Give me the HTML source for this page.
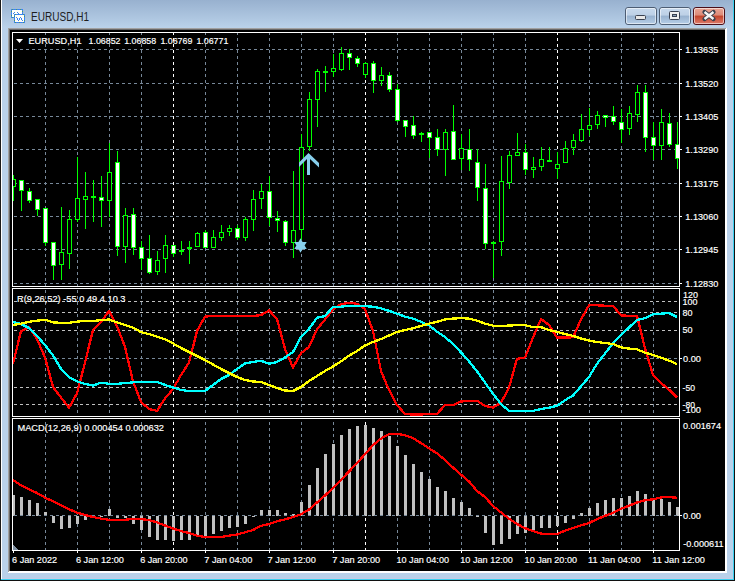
<!DOCTYPE html><html><head><meta charset="utf-8"><style>html,body{margin:0;padding:0;background:#fff;}body{width:737px;height:582px;overflow:hidden;}svg{display:block;font-family:"Liberation Sans",sans-serif;}</style></head><body>
<svg width="737" height="582" viewBox="0 0 737 582">
<defs><linearGradient id="tg" x1="0" y1="0" x2="0" y2="1"><stop offset="0" stop-color="#98b1cf"/><stop offset="1" stop-color="#bad2ea"/></linearGradient><linearGradient id="bt" x1="0" y1="0" x2="0" y2="1"><stop offset="0" stop-color="#c9dbee"/><stop offset="0.45" stop-color="#bdd0e6"/><stop offset="0.5" stop-color="#98b2cf"/><stop offset="1" stop-color="#b8cfe8"/></linearGradient><linearGradient id="ct" x1="0" y1="0" x2="0" y2="1"><stop offset="0" stop-color="#eaa898"/><stop offset="0.45" stop-color="#dc8a78"/><stop offset="0.5" stop-color="#c2432a"/><stop offset="1" stop-color="#e08070"/></linearGradient></defs>
<g shape-rendering="crispEdges">
<rect x="0" y="0" width="737" height="582" fill="#ffffff"/>
<rect x="0" y="0" width="735" height="581" fill="#b9d1ea"/>
<rect x="0" y="0" width="735" height="28" fill="url(#tg)"/>
<rect x="0" y="0" width="1" height="581" fill="#1a1a1a"/>
<rect x="1" y="0" width="1" height="579" fill="#ffffff"/>
<rect x="733" y="0" width="1" height="580" fill="#3ad0f0"/>
<rect x="734" y="0" width="1" height="581" fill="#101010"/>
<rect x="2" y="578" width="731" height="1" fill="#c8cce6"/>
<rect x="1" y="579" width="733" height="1" fill="#3ad0f0"/>
<rect x="0" y="580" width="735" height="1" fill="#101010"/>
<rect x="8" y="28" width="719" height="545" fill="#ffffff"/>
<rect x="8" y="28" width="718" height="1" fill="#a0a0a0"/>
<rect x="8" y="28" width="1" height="544" fill="#a0a0a0"/>
<rect x="9" y="29" width="716" height="1" fill="#696969"/>
<rect x="9" y="29" width="1" height="542" fill="#696969"/>
<rect x="10" y="30" width="715" height="541" fill="#000000"/>
</g>
<g shape-rendering="crispEdges"><rect x="11" y="9" width="12" height="9" fill="#3d84f2"/><rect x="12" y="10" width="10" height="7" fill="#fffef8"/><rect x="12" y="9" width="1" height="1" fill="#4a9a6a"/><rect x="12" y="17" width="1" height="1" fill="#4a9a6a"/><rect x="16" y="9" width="1" height="1" fill="#4a9a6a"/><rect x="16" y="17" width="1" height="1" fill="#4a9a6a"/><rect x="20" y="9" width="1" height="1" fill="#4a9a6a"/><rect x="20" y="17" width="1" height="1" fill="#4a9a6a"/><rect x="11" y="11" width="1" height="1" fill="#4a9a6a"/><rect x="22" y="11" width="1" height="1" fill="#4a9a6a"/><rect x="11" y="15" width="1" height="1" fill="#4a9a6a"/><rect x="22" y="15" width="1" height="1" fill="#4a9a6a"/><rect x="14" y="14" width="11" height="9" fill="#3d84f2"/><rect x="15" y="15" width="9" height="7" fill="#fffef8"/><rect x="15" y="14" width="1" height="1" fill="#4a9a6a"/><rect x="15" y="22" width="1" height="1" fill="#4a9a6a"/><rect x="19" y="14" width="1" height="1" fill="#4a9a6a"/><rect x="19" y="22" width="1" height="1" fill="#4a9a6a"/><rect x="23" y="14" width="1" height="1" fill="#4a9a6a"/><rect x="23" y="22" width="1" height="1" fill="#4a9a6a"/><rect x="14" y="16" width="1" height="1" fill="#4a9a6a"/><rect x="24" y="16" width="1" height="1" fill="#4a9a6a"/><rect x="14" y="20" width="1" height="1" fill="#4a9a6a"/><rect x="24" y="20" width="1" height="1" fill="#4a9a6a"/><rect x="13" y="13" width="1" height="1" fill="#3d84f2"/><rect x="14" y="12" width="1" height="1" fill="#3d84f2"/><rect x="17" y="12" width="1" height="1" fill="#3d84f2"/><rect x="18" y="13" width="1" height="1" fill="#3d84f2"/><rect x="19" y="14" width="1" height="1" fill="#3d84f2"/><rect x="16" y="17" width="1" height="1" fill="#3d84f2"/><rect x="17" y="18" width="1" height="1" fill="#3d84f2"/><rect x="17" y="19" width="1" height="1" fill="#3d84f2"/><rect x="18" y="20" width="1" height="1" fill="#3d84f2"/><rect x="19" y="19" width="1" height="1" fill="#3d84f2"/><rect x="19" y="18" width="1" height="1" fill="#3d84f2"/><rect x="20" y="17" width="1" height="1" fill="#3d84f2"/><rect x="21" y="18" width="1" height="1" fill="#3d84f2"/><rect x="21" y="19" width="1" height="1" fill="#3d84f2"/><rect x="22" y="20" width="1" height="1" fill="#3d84f2"/></g>
<text x="31" y="21" font-size="12" fill="#1e1e1e" textLength="58" lengthAdjust="spacingAndGlyphs">EURUSD,H1</text>
<rect x="625.5" y="7.5" width="31" height="17" rx="2.5" ry="2.5" fill="url(#bt)" stroke="#4d5d73" stroke-width="1"/>
<rect x="626.5" y="8.5" width="29" height="15" rx="1.5" ry="1.5" fill="none" stroke="#ffffff" stroke-opacity="0.55" stroke-width="1"/>
<rect x="659.5" y="7.5" width="31" height="17" rx="2.5" ry="2.5" fill="url(#bt)" stroke="#4d5d73" stroke-width="1"/>
<rect x="660.5" y="8.5" width="29" height="15" rx="1.5" ry="1.5" fill="none" stroke="#ffffff" stroke-opacity="0.55" stroke-width="1"/>
<rect x="693.5" y="7.5" width="31" height="17" rx="2.5" ry="2.5" fill="url(#ct)" stroke="#4a0e18" stroke-width="1"/>
<rect x="694.5" y="8.5" width="29" height="15" rx="1.5" ry="1.5" fill="none" stroke="#ffffff" stroke-opacity="0.55" stroke-width="1"/>
<rect x="635.5" y="15.5" width="10" height="4" rx="1" fill="#e8e8e8" stroke="#3a4150" stroke-width="1"/>
<rect x="669.5" y="11.5" width="10" height="8" rx="1" fill="#f0f0f0" stroke="#3a4150" stroke-width="1"/>
<rect x="672.5" y="14.5" width="4" height="2" fill="#8aa0b8" stroke="#3a4150" stroke-width="1"/>
<path d="M704.5,12 L713.5,19 M713.5,12 L704.5,19" stroke="#3a3f4c" stroke-width="4.2" stroke-linecap="round"/>
<path d="M704.5,12 L713.5,19 M713.5,12 L704.5,19" stroke="#f4f4f4" stroke-width="2.4" stroke-linecap="butt"/>
<g shape-rendering="crispEdges">
<line x1="14" y1="49.5" x2="679" y2="49.5" stroke="#778899" stroke-width="1" stroke-dasharray="3 3" />
<line x1="14" y1="83.5" x2="679" y2="83.5" stroke="#778899" stroke-width="1" stroke-dasharray="3 3" />
<line x1="14" y1="116.5" x2="679" y2="116.5" stroke="#778899" stroke-width="1" stroke-dasharray="3 3" />
<line x1="14" y1="149.5" x2="679" y2="149.5" stroke="#778899" stroke-width="1" stroke-dasharray="3 3" />
<line x1="14" y1="183.5" x2="679" y2="183.5" stroke="#778899" stroke-width="1" stroke-dasharray="3 3" />
<line x1="14" y1="216.5" x2="679" y2="216.5" stroke="#778899" stroke-width="1" stroke-dasharray="3 3" />
<line x1="14" y1="249.5" x2="679" y2="249.5" stroke="#778899" stroke-width="1" stroke-dasharray="3 3" />
<line x1="14" y1="283.5" x2="679" y2="283.5" stroke="#778899" stroke-width="1" stroke-dasharray="3 3" />
<line x1="45.5" y1="33" x2="45.5" y2="286" stroke="#778899" stroke-width="1" stroke-dasharray="3 3" stroke-dashoffset="1"/>
<line x1="45.5" y1="289" x2="45.5" y2="416" stroke="#778899" stroke-width="1" stroke-dasharray="3 3" stroke-dashoffset="5"/>
<line x1="45.5" y1="419" x2="45.5" y2="550" stroke="#778899" stroke-width="1" stroke-dasharray="3 3" stroke-dashoffset="3"/>
<line x1="77.5" y1="33" x2="77.5" y2="286" stroke="#778899" stroke-width="1" stroke-dasharray="3 3" stroke-dashoffset="1"/>
<line x1="77.5" y1="289" x2="77.5" y2="416" stroke="#778899" stroke-width="1" stroke-dasharray="3 3" stroke-dashoffset="5"/>
<line x1="77.5" y1="419" x2="77.5" y2="550" stroke="#778899" stroke-width="1" stroke-dasharray="3 3" stroke-dashoffset="3"/>
<line x1="109.5" y1="33" x2="109.5" y2="286" stroke="#778899" stroke-width="1" stroke-dasharray="3 3" stroke-dashoffset="1"/>
<line x1="109.5" y1="289" x2="109.5" y2="416" stroke="#778899" stroke-width="1" stroke-dasharray="3 3" stroke-dashoffset="5"/>
<line x1="109.5" y1="419" x2="109.5" y2="550" stroke="#778899" stroke-width="1" stroke-dasharray="3 3" stroke-dashoffset="3"/>
<line x1="141.5" y1="33" x2="141.5" y2="286" stroke="#778899" stroke-width="1" stroke-dasharray="3 3" stroke-dashoffset="1"/>
<line x1="141.5" y1="289" x2="141.5" y2="416" stroke="#778899" stroke-width="1" stroke-dasharray="3 3" stroke-dashoffset="5"/>
<line x1="141.5" y1="419" x2="141.5" y2="550" stroke="#778899" stroke-width="1" stroke-dasharray="3 3" stroke-dashoffset="3"/>
<line x1="173.5" y1="33" x2="173.5" y2="286" stroke="#ffffff" stroke-width="1" stroke-dasharray="3 3" stroke-dashoffset="1"/>
<line x1="173.5" y1="289" x2="173.5" y2="416" stroke="#ffffff" stroke-width="1" stroke-dasharray="3 3" stroke-dashoffset="5"/>
<line x1="173.5" y1="419" x2="173.5" y2="550" stroke="#ffffff" stroke-width="1" stroke-dasharray="3 3" stroke-dashoffset="3"/>
<line x1="205.5" y1="33" x2="205.5" y2="286" stroke="#778899" stroke-width="1" stroke-dasharray="3 3" stroke-dashoffset="1"/>
<line x1="205.5" y1="289" x2="205.5" y2="416" stroke="#778899" stroke-width="1" stroke-dasharray="3 3" stroke-dashoffset="5"/>
<line x1="205.5" y1="419" x2="205.5" y2="550" stroke="#778899" stroke-width="1" stroke-dasharray="3 3" stroke-dashoffset="3"/>
<line x1="237.5" y1="33" x2="237.5" y2="286" stroke="#778899" stroke-width="1" stroke-dasharray="3 3" stroke-dashoffset="1"/>
<line x1="237.5" y1="289" x2="237.5" y2="416" stroke="#778899" stroke-width="1" stroke-dasharray="3 3" stroke-dashoffset="5"/>
<line x1="237.5" y1="419" x2="237.5" y2="550" stroke="#778899" stroke-width="1" stroke-dasharray="3 3" stroke-dashoffset="3"/>
<line x1="269.5" y1="33" x2="269.5" y2="286" stroke="#778899" stroke-width="1" stroke-dasharray="3 3" stroke-dashoffset="1"/>
<line x1="269.5" y1="289" x2="269.5" y2="416" stroke="#778899" stroke-width="1" stroke-dasharray="3 3" stroke-dashoffset="5"/>
<line x1="269.5" y1="419" x2="269.5" y2="550" stroke="#778899" stroke-width="1" stroke-dasharray="3 3" stroke-dashoffset="3"/>
<line x1="301.5" y1="33" x2="301.5" y2="286" stroke="#778899" stroke-width="1" stroke-dasharray="3 3" stroke-dashoffset="1"/>
<line x1="301.5" y1="289" x2="301.5" y2="416" stroke="#778899" stroke-width="1" stroke-dasharray="3 3" stroke-dashoffset="5"/>
<line x1="301.5" y1="419" x2="301.5" y2="550" stroke="#778899" stroke-width="1" stroke-dasharray="3 3" stroke-dashoffset="3"/>
<line x1="333.5" y1="33" x2="333.5" y2="286" stroke="#778899" stroke-width="1" stroke-dasharray="3 3" stroke-dashoffset="1"/>
<line x1="333.5" y1="289" x2="333.5" y2="416" stroke="#778899" stroke-width="1" stroke-dasharray="3 3" stroke-dashoffset="5"/>
<line x1="333.5" y1="419" x2="333.5" y2="550" stroke="#778899" stroke-width="1" stroke-dasharray="3 3" stroke-dashoffset="3"/>
<line x1="365.5" y1="33" x2="365.5" y2="286" stroke="#ffffff" stroke-width="1" stroke-dasharray="3 3" stroke-dashoffset="1"/>
<line x1="365.5" y1="289" x2="365.5" y2="416" stroke="#ffffff" stroke-width="1" stroke-dasharray="3 3" stroke-dashoffset="5"/>
<line x1="365.5" y1="419" x2="365.5" y2="550" stroke="#ffffff" stroke-width="1" stroke-dasharray="3 3" stroke-dashoffset="3"/>
<line x1="397.5" y1="33" x2="397.5" y2="286" stroke="#778899" stroke-width="1" stroke-dasharray="3 3" stroke-dashoffset="1"/>
<line x1="397.5" y1="289" x2="397.5" y2="416" stroke="#778899" stroke-width="1" stroke-dasharray="3 3" stroke-dashoffset="5"/>
<line x1="397.5" y1="419" x2="397.5" y2="550" stroke="#778899" stroke-width="1" stroke-dasharray="3 3" stroke-dashoffset="3"/>
<line x1="429.5" y1="33" x2="429.5" y2="286" stroke="#778899" stroke-width="1" stroke-dasharray="3 3" stroke-dashoffset="1"/>
<line x1="429.5" y1="289" x2="429.5" y2="416" stroke="#778899" stroke-width="1" stroke-dasharray="3 3" stroke-dashoffset="5"/>
<line x1="429.5" y1="419" x2="429.5" y2="550" stroke="#778899" stroke-width="1" stroke-dasharray="3 3" stroke-dashoffset="3"/>
<line x1="461.5" y1="33" x2="461.5" y2="286" stroke="#778899" stroke-width="1" stroke-dasharray="3 3" stroke-dashoffset="1"/>
<line x1="461.5" y1="289" x2="461.5" y2="416" stroke="#778899" stroke-width="1" stroke-dasharray="3 3" stroke-dashoffset="5"/>
<line x1="461.5" y1="419" x2="461.5" y2="550" stroke="#778899" stroke-width="1" stroke-dasharray="3 3" stroke-dashoffset="3"/>
<line x1="493.5" y1="33" x2="493.5" y2="286" stroke="#778899" stroke-width="1" stroke-dasharray="3 3" stroke-dashoffset="1"/>
<line x1="493.5" y1="289" x2="493.5" y2="416" stroke="#778899" stroke-width="1" stroke-dasharray="3 3" stroke-dashoffset="5"/>
<line x1="493.5" y1="419" x2="493.5" y2="550" stroke="#778899" stroke-width="1" stroke-dasharray="3 3" stroke-dashoffset="3"/>
<line x1="525.5" y1="33" x2="525.5" y2="286" stroke="#778899" stroke-width="1" stroke-dasharray="3 3" stroke-dashoffset="1"/>
<line x1="525.5" y1="289" x2="525.5" y2="416" stroke="#778899" stroke-width="1" stroke-dasharray="3 3" stroke-dashoffset="5"/>
<line x1="525.5" y1="419" x2="525.5" y2="550" stroke="#778899" stroke-width="1" stroke-dasharray="3 3" stroke-dashoffset="3"/>
<line x1="557.5" y1="33" x2="557.5" y2="286" stroke="#ffffff" stroke-width="1" stroke-dasharray="3 3" stroke-dashoffset="1"/>
<line x1="557.5" y1="289" x2="557.5" y2="416" stroke="#ffffff" stroke-width="1" stroke-dasharray="3 3" stroke-dashoffset="5"/>
<line x1="557.5" y1="419" x2="557.5" y2="550" stroke="#ffffff" stroke-width="1" stroke-dasharray="3 3" stroke-dashoffset="3"/>
<line x1="589.5" y1="33" x2="589.5" y2="286" stroke="#778899" stroke-width="1" stroke-dasharray="3 3" stroke-dashoffset="1"/>
<line x1="589.5" y1="289" x2="589.5" y2="416" stroke="#778899" stroke-width="1" stroke-dasharray="3 3" stroke-dashoffset="5"/>
<line x1="589.5" y1="419" x2="589.5" y2="550" stroke="#778899" stroke-width="1" stroke-dasharray="3 3" stroke-dashoffset="3"/>
<line x1="621.5" y1="33" x2="621.5" y2="286" stroke="#778899" stroke-width="1" stroke-dasharray="3 3" stroke-dashoffset="1"/>
<line x1="621.5" y1="289" x2="621.5" y2="416" stroke="#778899" stroke-width="1" stroke-dasharray="3 3" stroke-dashoffset="5"/>
<line x1="621.5" y1="419" x2="621.5" y2="550" stroke="#778899" stroke-width="1" stroke-dasharray="3 3" stroke-dashoffset="3"/>
<line x1="653.5" y1="33" x2="653.5" y2="286" stroke="#778899" stroke-width="1" stroke-dasharray="3 3" stroke-dashoffset="1"/>
<line x1="653.5" y1="289" x2="653.5" y2="416" stroke="#778899" stroke-width="1" stroke-dasharray="3 3" stroke-dashoffset="5"/>
<line x1="653.5" y1="419" x2="653.5" y2="550" stroke="#778899" stroke-width="1" stroke-dasharray="3 3" stroke-dashoffset="3"/>
<line x1="14" y1="301.5" x2="679" y2="301.5" stroke="#c0c0c0" stroke-width="1" stroke-dasharray="3 3" />
<line x1="14" y1="312.5" x2="679" y2="312.5" stroke="#c0c0c0" stroke-width="1" stroke-dasharray="3 3" />
<line x1="14" y1="330.5" x2="679" y2="330.5" stroke="#c0c0c0" stroke-width="1" stroke-dasharray="3 3" />
<line x1="14" y1="387.5" x2="679" y2="387.5" stroke="#c0c0c0" stroke-width="1" stroke-dasharray="3 3" />
<line x1="14" y1="404.5" x2="679" y2="404.5" stroke="#c0c0c0" stroke-width="1" stroke-dasharray="3 3" />
<line x1="14" y1="358.5" x2="679" y2="358.5" stroke="#778899" stroke-width="1" stroke-dasharray="3 3" />
</g>
<svg x="13" y="33" width="666" height="253" viewBox="13 33 666 253" overflow="hidden"><g shape-rendering="crispEdges">
<rect x="13" y="175" width="1" height="26" fill="#00ff00"/>
<rect x="11" y="179" width="5" height="8" fill="#00ff00"/>
<rect x="12" y="180" width="3" height="6" fill="#000000"/>
<rect x="21" y="180" width="1" height="31" fill="#00ff00"/>
<rect x="19" y="180" width="5" height="11" fill="#00ff00"/>
<rect x="20" y="181" width="3" height="9" fill="#ffffff"/>
<rect x="29" y="188" width="1" height="15" fill="#00ff00"/>
<rect x="27" y="191" width="5" height="10" fill="#00ff00"/>
<rect x="28" y="192" width="3" height="8" fill="#ffffff"/>
<rect x="37" y="199" width="1" height="17" fill="#00ff00"/>
<rect x="35" y="199" width="5" height="11" fill="#00ff00"/>
<rect x="36" y="200" width="3" height="9" fill="#ffffff"/>
<rect x="45" y="208" width="1" height="38" fill="#00ff00"/>
<rect x="43" y="208" width="5" height="35" fill="#00ff00"/>
<rect x="44" y="209" width="3" height="33" fill="#ffffff"/>
<rect x="53" y="242" width="1" height="38" fill="#00ff00"/>
<rect x="51" y="242" width="5" height="24" fill="#00ff00"/>
<rect x="52" y="243" width="3" height="22" fill="#ffffff"/>
<rect x="61" y="207" width="1" height="73" fill="#00ff00"/>
<rect x="59" y="252" width="5" height="13" fill="#00ff00"/>
<rect x="60" y="253" width="3" height="11" fill="#000000"/>
<rect x="69" y="210" width="1" height="59" fill="#00ff00"/>
<rect x="67" y="219" width="5" height="35" fill="#00ff00"/>
<rect x="68" y="220" width="3" height="33" fill="#000000"/>
<rect x="77" y="157" width="1" height="65" fill="#00ff00"/>
<rect x="75" y="198" width="5" height="22" fill="#00ff00"/>
<rect x="76" y="199" width="3" height="20" fill="#000000"/>
<rect x="85" y="172" width="1" height="57" fill="#00ff00"/>
<rect x="83" y="196" width="5" height="4" fill="#00ff00"/>
<rect x="84" y="197" width="3" height="2" fill="#000000"/>
<rect x="93" y="180" width="1" height="42" fill="#00ff00"/>
<rect x="91" y="196" width="5" height="2" fill="#00ff00"/>
<rect x="101" y="176" width="1" height="51" fill="#00ff00"/>
<rect x="99" y="197" width="5" height="4" fill="#00ff00"/>
<rect x="100" y="198" width="3" height="2" fill="#ffffff"/>
<rect x="109" y="143" width="1" height="74" fill="#00ff00"/>
<rect x="107" y="172" width="5" height="29" fill="#00ff00"/>
<rect x="108" y="173" width="3" height="27" fill="#000000"/>
<rect x="117" y="151" width="1" height="105" fill="#00ff00"/>
<rect x="115" y="162" width="5" height="85" fill="#00ff00"/>
<rect x="116" y="163" width="3" height="83" fill="#ffffff"/>
<rect x="125" y="208" width="1" height="55" fill="#00ff00"/>
<rect x="123" y="215" width="5" height="32" fill="#00ff00"/>
<rect x="124" y="216" width="3" height="30" fill="#000000"/>
<rect x="133" y="208" width="1" height="47" fill="#00ff00"/>
<rect x="131" y="214" width="5" height="34" fill="#00ff00"/>
<rect x="132" y="215" width="3" height="32" fill="#ffffff"/>
<rect x="141" y="241" width="1" height="29" fill="#00ff00"/>
<rect x="139" y="247" width="5" height="12" fill="#00ff00"/>
<rect x="140" y="248" width="3" height="10" fill="#ffffff"/>
<rect x="149" y="235" width="1" height="39" fill="#00ff00"/>
<rect x="147" y="258" width="5" height="15" fill="#00ff00"/>
<rect x="148" y="259" width="3" height="13" fill="#ffffff"/>
<rect x="157" y="251" width="1" height="24" fill="#00ff00"/>
<rect x="155" y="260" width="5" height="12" fill="#00ff00"/>
<rect x="156" y="261" width="3" height="10" fill="#000000"/>
<rect x="165" y="235" width="1" height="38" fill="#00ff00"/>
<rect x="163" y="245" width="5" height="14" fill="#00ff00"/>
<rect x="164" y="246" width="3" height="12" fill="#000000"/>
<rect x="173" y="245" width="1" height="12" fill="#00ff00"/>
<rect x="171" y="245" width="5" height="9" fill="#00ff00"/>
<rect x="172" y="246" width="3" height="7" fill="#ffffff"/>
<rect x="181" y="241" width="1" height="14" fill="#00ff00"/>
<rect x="179" y="250" width="5" height="2" fill="#00ff00"/>
<rect x="189" y="241" width="1" height="23" fill="#00ff00"/>
<rect x="187" y="247" width="5" height="2" fill="#00ff00"/>
<rect x="197" y="232" width="1" height="15" fill="#00ff00"/>
<rect x="195" y="233" width="5" height="14" fill="#00ff00"/>
<rect x="196" y="234" width="3" height="12" fill="#000000"/>
<rect x="205" y="230" width="1" height="18" fill="#00ff00"/>
<rect x="203" y="232" width="5" height="16" fill="#00ff00"/>
<rect x="204" y="233" width="3" height="14" fill="#ffffff"/>
<rect x="213" y="230" width="1" height="18" fill="#00ff00"/>
<rect x="211" y="237" width="5" height="11" fill="#00ff00"/>
<rect x="212" y="238" width="3" height="9" fill="#000000"/>
<rect x="221" y="225" width="1" height="16" fill="#00ff00"/>
<rect x="219" y="232" width="5" height="6" fill="#00ff00"/>
<rect x="220" y="233" width="3" height="4" fill="#000000"/>
<rect x="229" y="225" width="1" height="11" fill="#00ff00"/>
<rect x="227" y="228" width="5" height="4" fill="#00ff00"/>
<rect x="228" y="229" width="3" height="2" fill="#000000"/>
<rect x="237" y="225" width="1" height="15" fill="#00ff00"/>
<rect x="235" y="228" width="5" height="10" fill="#00ff00"/>
<rect x="236" y="229" width="3" height="8" fill="#ffffff"/>
<rect x="245" y="217" width="1" height="24" fill="#00ff00"/>
<rect x="243" y="219" width="5" height="19" fill="#00ff00"/>
<rect x="244" y="220" width="3" height="17" fill="#000000"/>
<rect x="253" y="190" width="1" height="41" fill="#00ff00"/>
<rect x="251" y="199" width="5" height="21" fill="#00ff00"/>
<rect x="252" y="200" width="3" height="19" fill="#000000"/>
<rect x="261" y="184" width="1" height="25" fill="#00ff00"/>
<rect x="259" y="191" width="5" height="8" fill="#00ff00"/>
<rect x="260" y="192" width="3" height="6" fill="#000000"/>
<rect x="269" y="176" width="1" height="50" fill="#00ff00"/>
<rect x="267" y="191" width="5" height="27" fill="#00ff00"/>
<rect x="268" y="192" width="3" height="25" fill="#ffffff"/>
<rect x="277" y="211" width="1" height="21" fill="#00ff00"/>
<rect x="275" y="218" width="5" height="3" fill="#00ff00"/>
<rect x="276" y="219" width="3" height="1" fill="#ffffff"/>
<rect x="285" y="220" width="1" height="26" fill="#00ff00"/>
<rect x="283" y="221" width="5" height="22" fill="#00ff00"/>
<rect x="284" y="222" width="3" height="20" fill="#ffffff"/>
<rect x="293" y="171" width="1" height="87" fill="#00ff00"/>
<rect x="291" y="230" width="5" height="13" fill="#00ff00"/>
<rect x="292" y="231" width="3" height="11" fill="#000000"/>
<rect x="301" y="134" width="1" height="106" fill="#00ff00"/>
<rect x="299" y="147" width="5" height="83" fill="#00ff00"/>
<rect x="300" y="148" width="3" height="81" fill="#000000"/>
<rect x="309" y="92" width="1" height="59" fill="#00ff00"/>
<rect x="307" y="99" width="5" height="48" fill="#00ff00"/>
<rect x="308" y="100" width="3" height="46" fill="#000000"/>
<rect x="317" y="69" width="1" height="58" fill="#00ff00"/>
<rect x="315" y="71" width="5" height="29" fill="#00ff00"/>
<rect x="316" y="72" width="3" height="27" fill="#000000"/>
<rect x="325" y="66" width="1" height="26" fill="#00ff00"/>
<rect x="323" y="71" width="5" height="2" fill="#00ff00"/>
<rect x="333" y="54" width="1" height="23" fill="#00ff00"/>
<rect x="331" y="68" width="5" height="4" fill="#00ff00"/>
<rect x="332" y="69" width="3" height="2" fill="#000000"/>
<rect x="341" y="47" width="1" height="24" fill="#00ff00"/>
<rect x="339" y="53" width="5" height="17" fill="#00ff00"/>
<rect x="340" y="54" width="3" height="15" fill="#000000"/>
<rect x="349" y="49" width="1" height="21" fill="#00ff00"/>
<rect x="347" y="53" width="5" height="5" fill="#00ff00"/>
<rect x="348" y="54" width="3" height="3" fill="#ffffff"/>
<rect x="357" y="56" width="1" height="11" fill="#00ff00"/>
<rect x="355" y="58" width="5" height="6" fill="#00ff00"/>
<rect x="356" y="59" width="3" height="4" fill="#ffffff"/>
<rect x="365" y="62" width="1" height="16" fill="#00ff00"/>
<rect x="363" y="63" width="5" height="12" fill="#00ff00"/>
<rect x="364" y="64" width="3" height="10" fill="#000000"/>
<rect x="373" y="61" width="1" height="32" fill="#00ff00"/>
<rect x="371" y="63" width="5" height="18" fill="#00ff00"/>
<rect x="372" y="64" width="3" height="16" fill="#ffffff"/>
<rect x="381" y="67" width="1" height="19" fill="#00ff00"/>
<rect x="379" y="75" width="5" height="6" fill="#00ff00"/>
<rect x="380" y="76" width="3" height="4" fill="#000000"/>
<rect x="389" y="72" width="1" height="20" fill="#00ff00"/>
<rect x="387" y="75" width="5" height="15" fill="#00ff00"/>
<rect x="388" y="76" width="3" height="13" fill="#ffffff"/>
<rect x="397" y="84" width="1" height="38" fill="#00ff00"/>
<rect x="395" y="89" width="5" height="32" fill="#00ff00"/>
<rect x="396" y="90" width="3" height="30" fill="#ffffff"/>
<rect x="405" y="120" width="1" height="17" fill="#00ff00"/>
<rect x="403" y="120" width="5" height="7" fill="#00ff00"/>
<rect x="404" y="121" width="3" height="5" fill="#ffffff"/>
<rect x="413" y="116" width="1" height="23" fill="#00ff00"/>
<rect x="411" y="125" width="5" height="11" fill="#00ff00"/>
<rect x="412" y="126" width="3" height="9" fill="#ffffff"/>
<rect x="421" y="132" width="1" height="10" fill="#00ff00"/>
<rect x="419" y="133" width="5" height="2" fill="#00ff00"/>
<rect x="429" y="132" width="1" height="26" fill="#00ff00"/>
<rect x="427" y="132" width="5" height="6" fill="#00ff00"/>
<rect x="428" y="133" width="3" height="4" fill="#ffffff"/>
<rect x="437" y="129" width="1" height="27" fill="#00ff00"/>
<rect x="435" y="137" width="5" height="13" fill="#00ff00"/>
<rect x="436" y="138" width="3" height="11" fill="#ffffff"/>
<rect x="445" y="129" width="1" height="47" fill="#00ff00"/>
<rect x="443" y="132" width="5" height="18" fill="#00ff00"/>
<rect x="444" y="133" width="3" height="16" fill="#000000"/>
<rect x="453" y="105" width="1" height="55" fill="#00ff00"/>
<rect x="451" y="131" width="5" height="29" fill="#00ff00"/>
<rect x="452" y="132" width="3" height="27" fill="#ffffff"/>
<rect x="461" y="134" width="1" height="36" fill="#00ff00"/>
<rect x="459" y="148" width="5" height="11" fill="#00ff00"/>
<rect x="460" y="149" width="3" height="9" fill="#000000"/>
<rect x="469" y="129" width="1" height="42" fill="#00ff00"/>
<rect x="467" y="149" width="5" height="11" fill="#00ff00"/>
<rect x="468" y="150" width="3" height="9" fill="#ffffff"/>
<rect x="477" y="149" width="1" height="52" fill="#00ff00"/>
<rect x="475" y="162" width="5" height="26" fill="#00ff00"/>
<rect x="476" y="163" width="3" height="24" fill="#ffffff"/>
<rect x="485" y="164" width="1" height="85" fill="#00ff00"/>
<rect x="483" y="188" width="5" height="56" fill="#00ff00"/>
<rect x="484" y="189" width="3" height="54" fill="#ffffff"/>
<rect x="493" y="241" width="1" height="37" fill="#00ff00"/>
<rect x="491" y="242" width="5" height="2" fill="#00ff00"/>
<rect x="501" y="156" width="1" height="100" fill="#00ff00"/>
<rect x="499" y="181" width="5" height="61" fill="#00ff00"/>
<rect x="500" y="182" width="3" height="59" fill="#000000"/>
<rect x="509" y="151" width="1" height="38" fill="#00ff00"/>
<rect x="507" y="155" width="5" height="28" fill="#00ff00"/>
<rect x="508" y="156" width="3" height="26" fill="#000000"/>
<rect x="517" y="133" width="1" height="23" fill="#00ff00"/>
<rect x="515" y="152" width="5" height="4" fill="#00ff00"/>
<rect x="516" y="153" width="3" height="2" fill="#000000"/>
<rect x="525" y="144" width="1" height="31" fill="#00ff00"/>
<rect x="523" y="152" width="5" height="18" fill="#00ff00"/>
<rect x="524" y="153" width="3" height="16" fill="#ffffff"/>
<rect x="533" y="157" width="1" height="21" fill="#00ff00"/>
<rect x="531" y="167" width="5" height="3" fill="#00ff00"/>
<rect x="532" y="168" width="3" height="1" fill="#000000"/>
<rect x="541" y="147" width="1" height="24" fill="#00ff00"/>
<rect x="539" y="159" width="5" height="8" fill="#00ff00"/>
<rect x="540" y="160" width="3" height="6" fill="#000000"/>
<rect x="549" y="147" width="1" height="15" fill="#00ff00"/>
<rect x="547" y="160" width="5" height="2" fill="#00ff00"/>
<rect x="557" y="152" width="1" height="27" fill="#00ff00"/>
<rect x="555" y="164" width="5" height="5" fill="#00ff00"/>
<rect x="556" y="165" width="3" height="3" fill="#000000"/>
<rect x="565" y="141" width="1" height="22" fill="#00ff00"/>
<rect x="563" y="148" width="5" height="15" fill="#00ff00"/>
<rect x="564" y="149" width="3" height="13" fill="#000000"/>
<rect x="573" y="134" width="1" height="21" fill="#00ff00"/>
<rect x="571" y="140" width="5" height="8" fill="#00ff00"/>
<rect x="572" y="141" width="3" height="6" fill="#000000"/>
<rect x="581" y="114" width="1" height="28" fill="#00ff00"/>
<rect x="579" y="129" width="5" height="12" fill="#00ff00"/>
<rect x="580" y="130" width="3" height="10" fill="#000000"/>
<rect x="589" y="108" width="1" height="28" fill="#00ff00"/>
<rect x="587" y="125" width="5" height="5" fill="#00ff00"/>
<rect x="588" y="126" width="3" height="3" fill="#000000"/>
<rect x="597" y="111" width="1" height="18" fill="#00ff00"/>
<rect x="595" y="115" width="5" height="10" fill="#00ff00"/>
<rect x="596" y="116" width="3" height="8" fill="#000000"/>
<rect x="605" y="115" width="1" height="12" fill="#00ff00"/>
<rect x="603" y="115" width="5" height="3" fill="#00ff00"/>
<rect x="604" y="116" width="3" height="1" fill="#ffffff"/>
<rect x="613" y="106" width="1" height="19" fill="#00ff00"/>
<rect x="611" y="116" width="5" height="6" fill="#00ff00"/>
<rect x="612" y="117" width="3" height="4" fill="#ffffff"/>
<rect x="621" y="109" width="1" height="34" fill="#00ff00"/>
<rect x="619" y="122" width="5" height="8" fill="#00ff00"/>
<rect x="620" y="123" width="3" height="6" fill="#ffffff"/>
<rect x="629" y="106" width="1" height="29" fill="#00ff00"/>
<rect x="627" y="113" width="5" height="16" fill="#00ff00"/>
<rect x="628" y="114" width="3" height="14" fill="#000000"/>
<rect x="637" y="85" width="1" height="37" fill="#00ff00"/>
<rect x="635" y="92" width="5" height="23" fill="#00ff00"/>
<rect x="636" y="93" width="3" height="21" fill="#000000"/>
<rect x="645" y="85" width="1" height="67" fill="#00ff00"/>
<rect x="643" y="92" width="5" height="46" fill="#00ff00"/>
<rect x="644" y="93" width="3" height="44" fill="#ffffff"/>
<rect x="653" y="122" width="1" height="38" fill="#00ff00"/>
<rect x="651" y="137" width="5" height="9" fill="#00ff00"/>
<rect x="652" y="138" width="3" height="7" fill="#ffffff"/>
<rect x="661" y="109" width="1" height="51" fill="#00ff00"/>
<rect x="659" y="122" width="5" height="24" fill="#00ff00"/>
<rect x="660" y="123" width="3" height="22" fill="#000000"/>
<rect x="669" y="113" width="1" height="34" fill="#00ff00"/>
<rect x="667" y="123" width="5" height="22" fill="#00ff00"/>
<rect x="668" y="124" width="3" height="20" fill="#ffffff"/>
<rect x="677" y="122" width="1" height="47" fill="#00ff00"/>
<rect x="675" y="144" width="5" height="15" fill="#00ff00"/>
<rect x="676" y="145" width="3" height="13" fill="#ffffff"/>
</g></svg>
<polygon points="308.5,153 319,163 319,167.5 310,159 310,175 307,175 307,159 299,167 299,162.5" fill="#87ceeb"/>
<polygon points="300.50,238.30 302.55,241.95 306.74,241.90 304.60,245.50 306.74,249.10 302.55,249.05 300.50,252.70 298.45,249.05 294.26,249.10 296.40,245.50 294.26,241.90 298.45,241.95" fill="#87ceeb"/>
<svg x="13" y="289" width="666" height="127" viewBox="13 289 666 127" overflow="hidden">
<polyline points="13,363.5 21,331.2 29,327.1 37,339.0 45,357.5 53,387.0 61,397.5 69,407.7 77,393.3 85,362.6 93,330.0 101,322.0 109,311.0 117,326.0 125,347.0 133,381.4 141,402.0 149,409.0 157,410.9 165,398.5 173,389.0 181,375.0 189,362.6 197,331.0 205,316.6 213,316.0 221,316.0 229,316.0 237,316.0 245,316.0 253,316.0 261,315.1 269,310.4 277,318.9 285,349.0 293,367.6 301,353.2 309,347.0 317,329.4 325,319.5 333,309.3 341,304.3 349,302.6 357,303.8 365,309.0 373,331.0 381,371.0 389,390.0 397,405.0 405,414.0 413,414.6 421,414.6 429,413.8 437,413.8 445,405.2 453,405.2 461,401.5 469,400.8 477,400.8 485,406.0 493,407.5 501,402.7 509,387.7 517,358.8 525,357.5 533,337.5 541,319.0 549,325.0 557,337.5 565,337.6 573,337.3 581,319.5 589,305.3 597,305.3 605,305.7 613,305.7 621,315.4 629,315.8 637,315.8 645,348.3 653,375.0 661,383.0 669,389.6 677,397.4" fill="none" stroke="#ff0000" stroke-width="2.3" stroke-linejoin="round" stroke-linecap="butt" shape-rendering="crispEdges"/>
<polyline points="13,322.0 21,324.0 29,328.0 37,336.0 45,345.0 53,355.5 61,368.8 69,377.0 77,381.4 85,383.9 93,385.6 101,382.6 109,383.9 117,383.9 125,383.0 133,382.4 141,381.8 149,381.8 157,381.8 165,384.9 173,387.5 181,390.0 189,391.0 197,391.0 205,391.0 213,385.0 221,379.0 229,375.0 237,369.0 245,363.5 253,362.0 261,360.7 269,363.8 277,362.0 285,357.5 293,352.0 301,337.0 309,328.8 317,317.8 325,316.0 333,307.0 341,306.7 349,305.7 357,305.7 365,306.1 373,306.7 381,308.4 389,310.8 397,313.7 405,316.6 413,318.6 421,321.8 429,325.3 437,331.8 445,337.0 453,344.0 461,352.4 469,361.3 477,371.3 485,382.6 493,393.8 501,404.0 509,410.9 517,410.9 525,410.9 533,410.9 541,409.0 549,407.7 557,405.9 565,400.2 573,395.5 581,386.4 589,377.0 597,363.8 605,353.5 613,343.2 621,335.0 629,327.5 637,320.0 645,318.2 653,314.2 661,313.7 669,313.0 677,317.0" fill="none" stroke="#00ffff" stroke-width="2.3" stroke-linejoin="round" stroke-linecap="butt" shape-rendering="crispEdges"/>
<polyline points="13,325.0 21,323.6 29,321.8 37,320.7 45,319.7 53,322.4 61,322.8 69,322.8 77,321.6 85,321.0 93,321.0 101,320.1 109,319.5 117,322.4 125,325.1 133,327.7 141,332.1 149,334.1 157,336.8 165,339.3 173,343.4 181,348.0 189,352.0 197,356.0 205,360.0 213,364.5 221,369.0 229,373.0 237,377.0 245,380.0 253,381.5 261,382.0 269,385.0 277,388.0 285,390.5 293,391.0 301,387.0 309,381.0 317,376.0 325,371.0 333,366.5 341,361.3 349,355.7 357,351.0 365,345.5 373,342.0 381,339.0 389,335.5 397,332.0 405,330.0 413,328.3 421,325.9 429,323.6 437,321.8 445,319.5 453,318.6 461,318.1 469,318.6 477,320.7 485,323.6 493,325.7 501,325.9 509,325.6 517,325.1 525,325.1 533,327.1 541,327.1 549,330.0 557,331.8 565,334.1 573,335.8 581,338.5 589,340.5 597,342.0 605,343.0 613,344.0 621,347.3 629,348.6 637,349.4 645,352.6 653,355.0 661,357.7 669,360.6 677,364.0" fill="none" stroke="#ffff00" stroke-width="2.3" stroke-linejoin="round" stroke-linecap="butt" shape-rendering="crispEdges"/>
</svg>
<g shape-rendering="crispEdges">
<rect x="12" y="495" width="3" height="21" fill="#c0c0c0"/>
<rect x="20" y="497" width="3" height="19" fill="#c0c0c0"/>
<rect x="28" y="500" width="3" height="16" fill="#c0c0c0"/>
<rect x="36" y="503" width="3" height="13" fill="#c0c0c0"/>
<rect x="44" y="512" width="3" height="4" fill="#c0c0c0"/>
<rect x="52" y="516" width="3" height="7" fill="#c0c0c0"/>
<rect x="60" y="516" width="3" height="13" fill="#c0c0c0"/>
<rect x="68" y="516" width="3" height="12" fill="#c0c0c0"/>
<rect x="76" y="516" width="3" height="8" fill="#c0c0c0"/>
<rect x="84" y="516" width="3" height="4" fill="#c0c0c0"/>
<rect x="92" y="516" width="3" height="1" fill="#c0c0c0"/>
<rect x="100" y="516" width="3" height="1" fill="#c0c0c0"/>
<rect x="108" y="509" width="3" height="7" fill="#c0c0c0"/>
<rect x="116" y="516" width="3" height="2" fill="#c0c0c0"/>
<rect x="124" y="516" width="3" height="2" fill="#c0c0c0"/>
<rect x="132" y="516" width="3" height="8" fill="#c0c0c0"/>
<rect x="140" y="516" width="3" height="14" fill="#c0c0c0"/>
<rect x="148" y="516" width="3" height="21" fill="#c0c0c0"/>
<rect x="156" y="516" width="3" height="24" fill="#c0c0c0"/>
<rect x="164" y="516" width="3" height="24" fill="#c0c0c0"/>
<rect x="172" y="516" width="3" height="25" fill="#c0c0c0"/>
<rect x="180" y="516" width="3" height="24" fill="#c0c0c0"/>
<rect x="188" y="516" width="3" height="24" fill="#c0c0c0"/>
<rect x="196" y="516" width="3" height="21" fill="#c0c0c0"/>
<rect x="204" y="516" width="3" height="20" fill="#c0c0c0"/>
<rect x="212" y="516" width="3" height="18" fill="#c0c0c0"/>
<rect x="220" y="516" width="3" height="15" fill="#c0c0c0"/>
<rect x="228" y="516" width="3" height="12" fill="#c0c0c0"/>
<rect x="236" y="516" width="3" height="11" fill="#c0c0c0"/>
<rect x="244" y="516" width="3" height="8" fill="#c0c0c0"/>
<rect x="252" y="516" width="3" height="1" fill="#c0c0c0"/>
<rect x="260" y="510" width="3" height="6" fill="#c0c0c0"/>
<rect x="268" y="510" width="3" height="6" fill="#c0c0c0"/>
<rect x="276" y="510" width="3" height="6" fill="#c0c0c0"/>
<rect x="284" y="513" width="3" height="3" fill="#c0c0c0"/>
<rect x="292" y="514" width="3" height="2" fill="#c0c0c0"/>
<rect x="300" y="502" width="3" height="14" fill="#c0c0c0"/>
<rect x="308" y="485" width="3" height="31" fill="#c0c0c0"/>
<rect x="316" y="468" width="3" height="48" fill="#c0c0c0"/>
<rect x="324" y="454" width="3" height="62" fill="#c0c0c0"/>
<rect x="332" y="444" width="3" height="72" fill="#c0c0c0"/>
<rect x="340" y="435" width="3" height="81" fill="#c0c0c0"/>
<rect x="348" y="429" width="3" height="87" fill="#c0c0c0"/>
<rect x="356" y="426" width="3" height="90" fill="#c0c0c0"/>
<rect x="364" y="425" width="3" height="91" fill="#c0c0c0"/>
<rect x="372" y="428" width="3" height="88" fill="#c0c0c0"/>
<rect x="380" y="431" width="3" height="85" fill="#c0c0c0"/>
<rect x="388" y="436" width="3" height="80" fill="#c0c0c0"/>
<rect x="396" y="446" width="3" height="70" fill="#c0c0c0"/>
<rect x="404" y="455" width="3" height="61" fill="#c0c0c0"/>
<rect x="412" y="464" width="3" height="52" fill="#c0c0c0"/>
<rect x="420" y="472" width="3" height="44" fill="#c0c0c0"/>
<rect x="428" y="479" width="3" height="37" fill="#c0c0c0"/>
<rect x="436" y="487" width="3" height="29" fill="#c0c0c0"/>
<rect x="444" y="491" width="3" height="25" fill="#c0c0c0"/>
<rect x="452" y="498" width="3" height="18" fill="#c0c0c0"/>
<rect x="460" y="502" width="3" height="14" fill="#c0c0c0"/>
<rect x="468" y="508" width="3" height="8" fill="#c0c0c0"/>
<rect x="476" y="516" width="3" height="1" fill="#c0c0c0"/>
<rect x="484" y="516" width="3" height="17" fill="#c0c0c0"/>
<rect x="492" y="516" width="3" height="29" fill="#c0c0c0"/>
<rect x="500" y="516" width="3" height="28" fill="#c0c0c0"/>
<rect x="508" y="516" width="3" height="23" fill="#c0c0c0"/>
<rect x="516" y="516" width="3" height="18" fill="#c0c0c0"/>
<rect x="524" y="516" width="3" height="17" fill="#c0c0c0"/>
<rect x="532" y="516" width="3" height="15" fill="#c0c0c0"/>
<rect x="540" y="516" width="3" height="12" fill="#c0c0c0"/>
<rect x="548" y="516" width="3" height="12" fill="#c0c0c0"/>
<rect x="556" y="516" width="3" height="10" fill="#c0c0c0"/>
<rect x="564" y="516" width="3" height="7" fill="#c0c0c0"/>
<rect x="572" y="516" width="3" height="3" fill="#c0c0c0"/>
<rect x="580" y="513" width="3" height="3" fill="#c0c0c0"/>
<rect x="588" y="508" width="3" height="8" fill="#c0c0c0"/>
<rect x="596" y="503" width="3" height="13" fill="#c0c0c0"/>
<rect x="604" y="500" width="3" height="16" fill="#c0c0c0"/>
<rect x="612" y="498" width="3" height="18" fill="#c0c0c0"/>
<rect x="620" y="498" width="3" height="18" fill="#c0c0c0"/>
<rect x="628" y="496" width="3" height="20" fill="#c0c0c0"/>
<rect x="636" y="491" width="3" height="25" fill="#c0c0c0"/>
<rect x="644" y="494" width="3" height="22" fill="#c0c0c0"/>
<rect x="652" y="499" width="3" height="17" fill="#c0c0c0"/>
<rect x="660" y="499" width="3" height="17" fill="#c0c0c0"/>
<rect x="668" y="502" width="3" height="14" fill="#c0c0c0"/>
<rect x="676" y="507" width="3" height="9" fill="#c0c0c0"/>
</g>
<g shape-rendering="crispEdges">
<line x1="14" y1="515.5" x2="679" y2="515.5" stroke="#778899" stroke-width="1" stroke-dasharray="3 3" />
</g>
<svg x="13" y="419" width="666" height="131" viewBox="13 419 666 131" overflow="hidden">
<polyline points="13,480.0 21,485.3 29,489.2 37,493.0 45,497.6 53,501.4 61,505.3 69,509.2 77,512.6 85,515.0 93,517.0 101,518.6 109,519.8 117,519.8 125,519.8 133,518.8 141,519.1 149,520.1 157,522.4 165,525.5 173,528.5 181,531.1 189,533.0 197,535.6 205,537.1 213,537.1 221,537.1 229,535.6 237,534.5 245,532.3 253,530.0 261,525.8 269,524.1 277,521.2 285,519.4 293,517.1 301,514.2 309,509.5 317,502.5 325,495.5 333,488.0 341,479.9 349,471.5 357,463.1 365,454.1 373,445.1 381,438.6 389,434.1 397,433.7 405,435.4 413,438.0 421,443.1 429,448.3 437,453.4 445,459.9 453,467.6 461,474.7 469,481.5 477,491.0 485,497.0 493,506.0 501,512.4 509,518.8 517,524.0 525,528.1 533,531.1 541,533.6 549,534.0 557,534.0 565,530.7 573,528.0 581,525.4 589,523.0 597,519.1 605,515.9 613,512.8 621,508.8 629,505.7 637,502.5 645,500.2 653,499.4 661,497.4 669,497.0 677,497.8" fill="none" stroke="#ff0000" stroke-width="2.3" stroke-linejoin="round" stroke-linecap="butt" shape-rendering="crispEdges"/>
</svg>
<g shape-rendering="crispEdges" fill="#ffffff">
<rect x="12" y="32" width="668" height="1"/>
<rect x="12" y="286" width="668" height="1"/>
<rect x="12" y="32" width="1" height="255"/>
<rect x="679" y="32" width="1" height="255"/>
<rect x="12" y="288" width="668" height="1"/>
<rect x="12" y="416" width="668" height="1"/>
<rect x="12" y="288" width="1" height="129"/>
<rect x="679" y="288" width="1" height="129"/>
<rect x="12" y="418" width="668" height="1"/>
<rect x="12" y="550" width="668" height="1"/>
<rect x="12" y="418" width="1" height="133"/>
<rect x="679" y="418" width="1" height="133"/>
<rect x="680" y="49" width="2" height="1"/>
<rect x="680" y="83" width="2" height="1"/>
<rect x="680" y="116" width="2" height="1"/>
<rect x="680" y="149" width="2" height="1"/>
<rect x="680" y="183" width="2" height="1"/>
<rect x="680" y="216" width="2" height="1"/>
<rect x="680" y="249" width="2" height="1"/>
<rect x="680" y="283" width="2" height="1"/>
<rect x="680" y="358" width="2" height="1"/>
<rect x="680" y="515" width="2" height="1"/>
<rect x="13" y="551" width="1" height="2"/>
<rect x="77" y="551" width="1" height="2"/>
<rect x="141" y="551" width="1" height="2"/>
<rect x="205" y="551" width="1" height="2"/>
<rect x="269" y="551" width="1" height="2"/>
<rect x="333" y="551" width="1" height="2"/>
<rect x="397" y="551" width="1" height="2"/>
<rect x="461" y="551" width="1" height="2"/>
<rect x="525" y="551" width="1" height="2"/>
<rect x="589" y="551" width="1" height="2"/>
<rect x="653" y="551" width="1" height="2"/>
</g>
<polygon points="13,545 13,550 18,550" fill="#8090a0" shape-rendering="crispEdges"/>
<polygon points="16,39 23,39 19.5,43" fill="#ffffff"/>
<text x="28.5" y="44" font-size="9.6" fill="#ffffff" stroke="#ffffff" stroke-width="0.18" textLength="53" lengthAdjust="spacingAndGlyphs">EURUSD,H1</text>
<text x="88.5" y="44" font-size="9.6" fill="#ffffff" stroke="#ffffff" stroke-width="0.18" textLength="32" lengthAdjust="spacingAndGlyphs">1.06852</text>
<text x="124.2" y="44" font-size="9.6" fill="#ffffff" stroke="#ffffff" stroke-width="0.18" textLength="32" lengthAdjust="spacingAndGlyphs">1.06858</text>
<text x="160.4" y="44" font-size="9.6" fill="#ffffff" stroke="#ffffff" stroke-width="0.18" textLength="32" lengthAdjust="spacingAndGlyphs">1.06769</text>
<text x="196.4" y="44" font-size="9.6" fill="#ffffff" stroke="#ffffff" stroke-width="0.18" textLength="32" lengthAdjust="spacingAndGlyphs">1.06771</text>
<text x="685.3" y="53" font-size="9.6" fill="#ffffff" stroke="#ffffff" stroke-width="0.18" textLength="33" lengthAdjust="spacingAndGlyphs">1.13635</text>
<text x="685.3" y="87" font-size="9.6" fill="#ffffff" stroke="#ffffff" stroke-width="0.18" textLength="33" lengthAdjust="spacingAndGlyphs">1.13520</text>
<text x="685.3" y="120" font-size="9.6" fill="#ffffff" stroke="#ffffff" stroke-width="0.18" textLength="33" lengthAdjust="spacingAndGlyphs">1.13405</text>
<text x="685.3" y="153" font-size="9.6" fill="#ffffff" stroke="#ffffff" stroke-width="0.18" textLength="33" lengthAdjust="spacingAndGlyphs">1.13290</text>
<text x="685.3" y="187" font-size="9.6" fill="#ffffff" stroke="#ffffff" stroke-width="0.18" textLength="33" lengthAdjust="spacingAndGlyphs">1.13175</text>
<text x="685.3" y="220" font-size="9.6" fill="#ffffff" stroke="#ffffff" stroke-width="0.18" textLength="33" lengthAdjust="spacingAndGlyphs">1.13060</text>
<text x="685.3" y="253" font-size="9.6" fill="#ffffff" stroke="#ffffff" stroke-width="0.18" textLength="33" lengthAdjust="spacingAndGlyphs">1.12945</text>
<text x="685.3" y="287" font-size="9.6" fill="#ffffff" stroke="#ffffff" stroke-width="0.18" textLength="33" lengthAdjust="spacingAndGlyphs">1.12830</text>
<text x="17" y="301.5" font-size="9.6" fill="#ffffff" stroke="#ffffff" stroke-width="0.18" textLength="108.5" lengthAdjust="spacingAndGlyphs">R(9,26,52) -55.0 49.4 10.3</text>
<text x="683" y="297.8" font-size="9.6" fill="#ffffff" stroke="#ffffff" stroke-width="0.18" textLength="15" lengthAdjust="spacingAndGlyphs">120</text>
<text x="682.5" y="304.8" font-size="9.6" fill="#ffffff" stroke="#ffffff" stroke-width="0.18" textLength="15" lengthAdjust="spacingAndGlyphs">100</text>
<text x="682.5" y="315.5" font-size="9.6" fill="#ffffff" stroke="#ffffff" stroke-width="0.18" textLength="10" lengthAdjust="spacingAndGlyphs">80</text>
<text x="682.5" y="333" font-size="9.6" fill="#ffffff" stroke="#ffffff" stroke-width="0.18" textLength="10" lengthAdjust="spacingAndGlyphs">50</text>
<text x="683" y="362" font-size="9.6" fill="#ffffff" stroke="#ffffff" stroke-width="0.18" textLength="18" lengthAdjust="spacingAndGlyphs">0.00</text>
<text x="682.5" y="390.8" font-size="9.6" fill="#ffffff" stroke="#ffffff" stroke-width="0.18" textLength="12.5" lengthAdjust="spacingAndGlyphs">-50</text>
<text x="682.5" y="407.5" font-size="9.6" fill="#ffffff" stroke="#ffffff" stroke-width="0.18" textLength="12.5" lengthAdjust="spacingAndGlyphs">-80</text>
<text x="682.5" y="412.8" font-size="9.6" fill="#ffffff" stroke="#ffffff" stroke-width="0.18" textLength="18.5" lengthAdjust="spacingAndGlyphs">-100</text>
<text x="17.5" y="431" font-size="9.6" fill="#ffffff" stroke="#ffffff" stroke-width="0.18" textLength="146.5" lengthAdjust="spacingAndGlyphs">MACD(12,26,9) 0.000454 0.000632</text>
<text x="683" y="429" font-size="9.6" fill="#ffffff" stroke="#ffffff" stroke-width="0.18" textLength="38" lengthAdjust="spacingAndGlyphs">0.001674</text>
<text x="683" y="519.2" font-size="9.6" fill="#ffffff" stroke="#ffffff" stroke-width="0.18" textLength="18" lengthAdjust="spacingAndGlyphs">0.00</text>
<text x="683.2" y="547" font-size="9.6" fill="#ffffff" stroke="#ffffff" stroke-width="0.18" textLength="40.5" lengthAdjust="spacingAndGlyphs">-0.000611</text>
<text x="12.1" y="563" font-size="9.6" fill="#ffffff" stroke="#ffffff" stroke-width="0.18" textLength="45" lengthAdjust="spacingAndGlyphs">6 Jan 2022</text>
<text x="75.9" y="563" font-size="9.6" fill="#ffffff" stroke="#ffffff" stroke-width="0.18" textLength="48.1" lengthAdjust="spacingAndGlyphs">6 Jan 12:00</text>
<text x="140.2" y="563" font-size="9.6" fill="#ffffff" stroke="#ffffff" stroke-width="0.18" textLength="47.5" lengthAdjust="spacingAndGlyphs">6 Jan 20:00</text>
<text x="204.3" y="563" font-size="9.6" fill="#ffffff" stroke="#ffffff" stroke-width="0.18" textLength="48" lengthAdjust="spacingAndGlyphs">7 Jan 04:00</text>
<text x="267.6" y="563" font-size="9.6" fill="#ffffff" stroke="#ffffff" stroke-width="0.18" textLength="48.2" lengthAdjust="spacingAndGlyphs">7 Jan 12:00</text>
<text x="332.2" y="563" font-size="9.6" fill="#ffffff" stroke="#ffffff" stroke-width="0.18" textLength="48" lengthAdjust="spacingAndGlyphs">7 Jan 20:00</text>
<text x="396.5" y="563" font-size="9.6" fill="#ffffff" stroke="#ffffff" stroke-width="0.18" textLength="52.5" lengthAdjust="spacingAndGlyphs">10 Jan 04:00</text>
<text x="460.3" y="563" font-size="9.6" fill="#ffffff" stroke="#ffffff" stroke-width="0.18" textLength="52.6" lengthAdjust="spacingAndGlyphs">10 Jan 12:00</text>
<text x="524.6" y="563" font-size="9.6" fill="#ffffff" stroke="#ffffff" stroke-width="0.18" textLength="52.4" lengthAdjust="spacingAndGlyphs">10 Jan 20:00</text>
<text x="588.1" y="563" font-size="9.6" fill="#ffffff" stroke="#ffffff" stroke-width="0.18" textLength="52.6" lengthAdjust="spacingAndGlyphs">11 Jan 04:00</text>
<text x="652.3" y="563" font-size="9.6" fill="#ffffff" stroke="#ffffff" stroke-width="0.18" textLength="52.6" lengthAdjust="spacingAndGlyphs">11 Jan 12:00</text>
</svg></body></html>
